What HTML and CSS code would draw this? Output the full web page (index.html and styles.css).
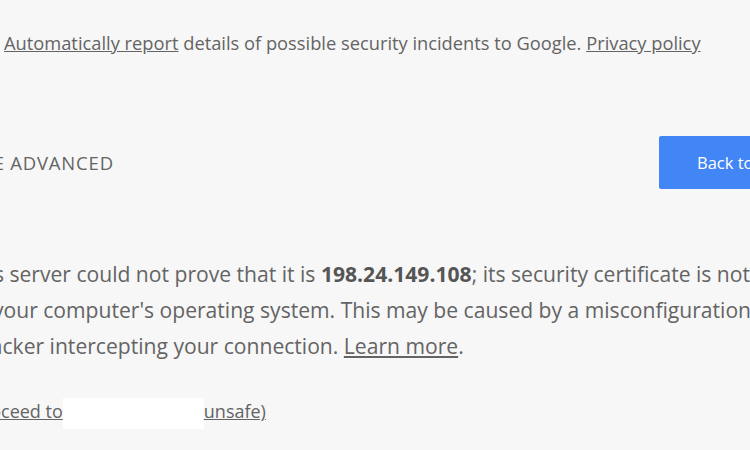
FILE: index.html
```html
<!DOCTYPE html>
<html lang="en">
<head>
<meta charset="utf-8">
<title>Privacy error</title>
<link rel="stylesheet" href="styles.css">
</head>
<body>
<div class="page">
  <div class="report">
    <a href="#" class="link">Automatically report</a> details of possible security incidents to Google. <a href="#" class="link">Privacy policy</a>
  </div>
  <div class="nav">
    <button class="btn-advanced">HIDE ADVANCED</button>
    <button class="btn-primary">Back to safety</button>
  </div>
  <p class="details">This server could not prove that it is <strong>198.24.149.108</strong>; its security certificate is not trusted by your computer's operating system. This may be caused by a misconfiguration or an attacker intercepting your connection. <a href="#" class="link">Learn more</a>.</p>
  <p class="proceed"><a href="#" class="link">Proceed to<span class="redact"></span>unsafe)</a></p>
</div>
</body>
</html>
```
FILE: styles.css
```css
html, body {
  margin: 0;
  padding: 0;
  background: #f7f7f7;
  overflow: hidden;
  width: 750px;
  height: 450px;
}
.page {
  font-family: "Open Sans", "Noto Sans", sans-serif;
  color: #646464;
  display: flex;
  flex-direction: column;
}
.link {
  color: #646464;
  text-decoration: underline;
}
.report {
  font-size: 18.3px;
  line-height: 24px;
  margin-top: 31px;
  margin-left: 4px;
  white-space: nowrap;
}
.nav {
  display: flex;
  justify-content: space-between;
  align-items: center;
  width: 900px;
  margin-left: -48px;
  margin-top: 81px;
}
.btn-advanced {
  font-family: inherit;
  font-size: 18.5px;
  letter-spacing: 0.8px;
  color: #646464;
  background: none;
  border: none;
  padding: 0;
  margin-left: 7px;
}
.btn-primary {
  font-family: inherit;
  font-size: 16.5px;
  color: #fff;
  background: #4285f4;
  border: none;
  border-radius: 2px;
  height: 53px;
  width: 193px;
  padding: 0 0 0 38px;
  text-align: left;
}
.details {
  font-size: 21.1px;
  line-height: 36px;
  margin: 67px 0 0 -36px;
  width: 872px;
}
.details strong {
  font-weight: bold;
  color: #555555;
}
.proceed {
  font-size: 18px;
  line-height: 32px;
  margin: 31px 0 0 -28px;
  white-space: nowrap;
}
.redact {
  display: inline-block;
  width: 141px;
  height: 31px;
  background: #fff;
  vertical-align: middle;
}
```
